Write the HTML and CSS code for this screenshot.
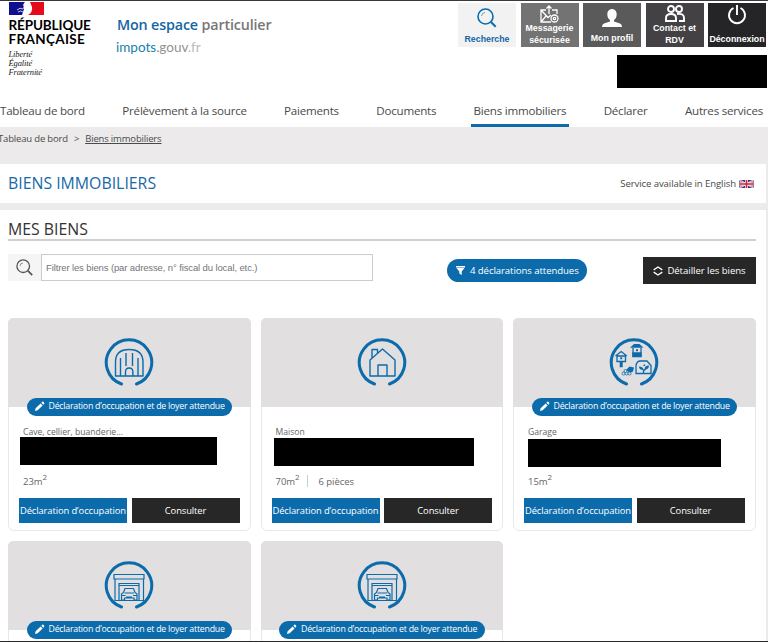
FILE: index.html
```
<!DOCTYPE html>
<html lang="fr">
<head>
<meta charset="utf-8">
<title>Biens immobiliers</title>
<link rel="stylesheet" href="styles.css">
</head>
<body>
<svg class="defs" width="0" height="0">
  <symbol id="ring" viewBox="0 0 50 50"><path d="M17.500 46A22.700 22.700 0 1 1 32.500 46" fill="none" stroke="#0b6bab" stroke-width="3" stroke-linecap="round"/></symbol>
  <symbol id="pen" viewBox="0 0 12 12"><path d="M1 11l.8-3L7.200 2.600l2.200 2.200L4 10.200zM8 1.900L9 .9q.6-.5 1.200 0l.9.9q.5.6 0 1.200L10.200 4z" fill="#fff"/></symbol>
  <symbol id="garage" viewBox="0 0 50 50"><use href="#ring"/><g fill="none" stroke="#0b6bab" stroke-width="1.200"><path d="M10 13.500h30v4.500H10zM11 18v21.500h28.500V18M15 39V22.500h20V39M15 24.500h20"/><path d="M17.500 39v-6l2-1.500 1.500-4h8.500l1.500 4 2 1.500v6h-3v-2h-9.500v2zM20.500 32h9.500M18 34.500h3.500M29 34.500h3.500M22 36h6" stroke-width="1.200"/></g></symbol>
</svg>
<div class="page">
  <header class="header">
    <div class="brand">
      <svg class="flag" width="36" height="13" viewBox="0 0 36 13"><path fill="#fff" d="M0 0h36v13H0z"/><path fill="#10108f" d="M0 0h16q-3 3-1 5-2 1 0 2l-2 6H0z"/><path fill="#e30b1c" d="M21 0h14v13H19q5-3 4-8z"/><path d="M8 8q3-3 6-1M9 10q3-2 5 0" stroke="#c6c6e8" fill="none"/></svg>
      <div class="rf"><div class="rep">RÉPUBLIQUE</div><div class="fr">FRANÇAISE</div></div>
      <div class="motto">Liberté<br>Égalité<br>Fraternité</div>
    </div>
    <div class="site">
      <div class="space"><b>Mon espace</b> particulier</div>
      <div class="domain"><span>impots</span>.gouv<i>.fr</i></div>
    </div>
    <div class="account">
      <div class="tiles">
        <div class="tile search"><svg width="20" height="20" viewBox="0 0 20 20" fill="none" stroke="#0b6bab" stroke-width="1.600"><circle cx="8.500" cy="8.500" r="7.500"/><path d="M13.700 13.700l5 5" stroke-width="2"/><path d="M4.500 8a4 4 0 0 1 3.500-3.500" stroke-width=".6"/></svg><span>Recherche</span></div>
        <div class="tile mail"><svg width="19" height="18" viewBox="0 0 19 18" fill="none" stroke="#fff" stroke-width="1.300"><path d="M6 5H1v12h10M12 5h5v4M1 5l7 7.500 3-2.500M1 17l5-6M9 9V1M6.500 3.500L9 1l2.500 2.500"/><circle cx="14.500" cy="13.500" r="3.500"/><circle cx="14.500" cy="13.500" r="1.200"/></svg><span>Messagerie<br>sécurisée</span></div>
        <div class="tile profile"><svg width="20" height="18" viewBox="0 0 20 18" fill="#fff"><path d="M5.300 5c0-6.700 9.400-6.700 9.400 0 0 3-1 5-2.700 6v1.500l6 2q2 .8 2 3.500H0q0-2.700 2-3.500l6-2V11C6.300 10 5.300 8 5.300 5z"/></svg><span>Mon profil</span></div>
        <div class="tile contact"><svg width="20" height="17" viewBox="0 0 20 17" fill="none" stroke="#fff" stroke-width="1.900"><circle cx="6" cy="4" r="3"/><circle cx="14" cy="4" r="3"/><path d="M1 16v-3q0-4 5-4t5 4v3zM12 9q7-1 7 4v3h-5"/></svg><span>Contact et<br>RDV</span></div>
        <div class="tile logout"><svg width="20" height="20" viewBox="0 0 20 20" fill="none" stroke="#fff" stroke-width="1.900"><path d="M6.500 3a8 8 0 1 0 7 0M10 0v10"/></svg><span>Déconnexion</span></div>
      </div>
      <div class="mask"></div>
    </div>
  </header>
  <nav class="nav">
    <a>Tableau de bord</a><a>Prélèvement à la source</a><a>Paiements</a><a>Documents</a><a class="active">Biens immobiliers</a><a>Déclarer</a><a>Autres services</a>
  </nav>
  <div class="crumbs"><span>Tableau de bord</span><span class="sep">&gt;</span><u>Biens immobiliers</u></div>
  <section class="title">
    <h1>BIENS IMMOBILIERS</h1>
    <div class="english">Service available in English <svg width="15" height="8" viewBox="0 0 15 8"><path fill="#283a80" d="M0 0h15v8H0z"/><path d="M0 0l15 8M15 0L0 8" stroke="#fff" stroke-width="1.600"/><path d="M0 0l15 8M15 0L0 8" stroke="#d2223c" stroke-width=".6"/><path d="M7.500 0v8M0 4h15" stroke="#fff" stroke-width="3"/><path d="M7.500 0v8M0 4h15" stroke="#d2223c" stroke-width="1.700"/></svg></div>
  </section>
  <main class="main">
    <h2>MES BIENS</h2>
    <div class="toolbar">
      <div class="filter"><div class="lens"><svg width="17" height="17" viewBox="0 0 17 17" fill="none" stroke="#555" stroke-width="1.300"><circle cx="7.200" cy="7.200" r="6.300"/><path d="M11.700 11.700l4.500 4.500" stroke-width="1.700"/><path d="M4 7a3 3 0 0 1 3-3" stroke-width=".6"/></svg></div><div class="field">Filtrer les biens (par adresse, n° fiscal du local, etc.)</div></div>
      <div class="pending"><svg width="9" height="9" viewBox="0 0 9 9"><path fill="#fff" d="M0 0h9v1.500H0zM.5 2h8L5.700 5.500V9L3.300 7.500v-2z"/></svg><span>4 déclarations attendues</span></div>
      <div class="detail"><svg width="10" height="10" viewBox="0 0 10 10" fill="none" stroke="#fff" stroke-width="1.300"><path d="M.7 3.900L5 1l4.300 2.900M.7 6.100L5 9l4.300-2.900"/></svg><span>Détailler les biens</span></div>
    </div>
    <div class="cards">
      <article class="card">
        <div class="visual"><svg width="50" height="50" viewBox="0 0 50 50"><use href="#ring"/><path d="M11.500 38V24q0-12.500 13.700-12.500T39 24v14zM16.500 38V20M22 28V15M28.500 28V15M34 38V20M21.500 38v-4q0-4 3.700-4t3.700 4v4" fill="none" stroke="#0b6bab" stroke-width="1.400" stroke-linejoin="round"/></svg></div>
        <div class="badge"><svg width="11" height="11"><use href="#pen"/></svg><span>Déclaration d’occupation et de loyer attendue</span></div>
        <div class="kind">Cave, cellier, buanderie...</div>
        <div class="address first"></div>
        <div class="facts"><span>23m<sup>2</sup></span></div>
        <div class="actions"><div class="declare"><span>Déclaration d’occupation</span></div><div class="consult"><span>Consulter</span></div></div>
      </article>
      <article class="card">
        <div class="visual"><svg width="50" height="50" viewBox="0 0 50 50"><use href="#ring"/><path d="M13 38V22l12.500-11L38 22v16zM15 20v-8.500h5.500v3.800M21 38V27h9v11" fill="none" stroke="#0b6bab" stroke-width="1.400" stroke-linejoin="round"/></svg></div>
        <div class="kind">Maison</div>
        <div class="address second"></div>
        <div class="facts"><span>70m<sup>2</sup></span><span class="rooms">6 pièces</span></div>
        <div class="actions"><div class="declare"><span>Déclaration d’occupation</span></div><div class="consult"><span>Consulter</span></div></div>
      </article>
      <article class="card">
        <div class="visual"><svg width="50" height="50" viewBox="0 0 50 50"><use href="#ring"/><g fill="none" stroke="#0b6bab" stroke-width="1.300"><path d="M8 17.500V23.500h8.500v-6M6.500 18L12.200 13.500l5.600 4.500M8 18h8.500M24 10v9M32 10v9M27 32v-4.500q1-4.500 4-4.500h7l4 4.500v8H27zM34.500 35.500v-4M34.500 33l4-4"/></g><path fill="#0b6bab" d="M21 9.800L25 6h5.500l4 3.800zM10.700 24h3v5.300h-3zM11.200 19.300h2v2h-2zM23.300 14.300h9.300v5h-9.300zM27 11.300h2v2h-2zM17 32l3.500-3.500 4.500 1-1 4-3 1.500zM35.500 31.500q0-4 4.500-4 0 4-4.500 4zM34.500 32q-4.500 0-4.500-3.500 4.500 0 4.500 3.500zM34 28l1.500-2 1 2z"/><g fill="#e1dfe0" stroke="#0b6bab" stroke-width=".8"><circle cx="14.500" cy="35.500" r="1.500"/><circle cx="17.500" cy="35.500" r="1.500"/><circle cx="20.500" cy="35.500" r="1.500"/><circle cx="16.500" cy="33" r="1.500"/></g></svg></div>
        <div class="badge"><svg width="11" height="11"><use href="#pen"/></svg><span>Déclaration d’occupation et de loyer attendue</span></div>
        <div class="kind">Garage</div>
        <div class="address third"></div>
        <div class="facts"><span>15m<sup>2</sup></span></div>
        <div class="actions"><div class="declare"><span>Déclaration d’occupation</span></div><div class="consult"><span>Consulter</span></div></div>
      </article>
      <article class="card">
        <div class="visual"><svg width="50" height="50"><use href="#garage"/></svg></div>
        <div class="badge"><svg width="11" height="11"><use href="#pen"/></svg><span>Déclaration d’occupation et de loyer attendue</span></div>
      </article>
      <article class="card">
        <div class="visual"><svg width="50" height="50"><use href="#garage"/></svg></div>
        <div class="badge"><svg width="11" height="11"><use href="#pen"/></svg><span>Déclaration d’occupation et de loyer attendue</span></div>
      </article>
    </div>
  </main>
</div>
</body>
</html>
```
FILE: styles.css
```
* { box-sizing: border-box; }
body { margin: 0; font-family: "Open Sans", sans-serif; color: #4a4a4a; }
svg { display: block; flex: none; }
.defs { position: absolute; }
.page { width: 768px; height: 642px; overflow: hidden; background: #eceaeb; border-top: 1px solid #3c393b; border-bottom: 1px solid #29282a; white-space: nowrap; }
.header { display: flex; height: 94px; background: #fff; }
.brand { width: 117px; padding: 1px 0 0 8.500px; color: #000; }
.rf { margin-top: 3px; font: 700 13.500px/14px Lato, sans-serif; }
.rep { letter-spacing: -.12px; }
.fr { letter-spacing: .35px; }
.motto { margin-top: 4px; font: italic 8.500px/8.800px "Liberation Serif", serif; letter-spacing: -.15px; color: #222; }
.site { flex: 1; padding-top: 14px; }
.space { font-size: 14.300px; line-height: 20px; font-weight: 550; letter-spacing: -.15px; color: #777; }
.space b { color: #1465a4; font-weight: 650; }
.domain { margin: 3px 0 0 -1px; font: 13.500px/18px Lato, sans-serif; color: #929292; }
.domain span { color: #1681a8; }
.domain i { font-style: normal; color: #bbb; }
.account { width: 310px; }
.tiles { display: flex; gap: 4.500px; padding-top: 2px; }
.tile { width: 58px; height: 44px; padding-bottom: 3px; display: flex; flex-direction: column; align-items: center; justify-content: flex-end; color: #fff; font: 700 8.800px/11.500px "Liberation Sans", sans-serif; text-align: center; }
.tile svg { margin-bottom: 2px; }
.tile.search { background: #f2f2f3; color: #1267a5; padding-bottom: 2px; }
.tile.search svg { margin-bottom: 6px; }
.tile.mail { background: #747374; }
.tile.mail svg { margin-bottom: 0; }
.tile.contact svg { margin-bottom: 1px; }
.tile.mail, .tile.contact { padding-bottom: 1px; }
.tile.profile { background: #5b5a5b; padding-bottom: 3px; }
.tile.profile svg { margin-bottom: 6px; }
.tile.contact { background: #434144; }
.tile.logout { background: #252427; padding-bottom: 2px; }
.tile.logout svg { margin-bottom: 9px; }
.mask { width: 150px; height: 33px; margin: 8px 0 0 158.500px; background: #000; }
.nav { display: flex; justify-content: space-between; height: 32px; padding-right: 5px; background: #fff; font-size: 11.600px; line-height: 32px; letter-spacing: -.23px; }
.nav a.active { height: 32px; margin: 0 -2.500px; padding: 0 2.500px; border-bottom: 3px solid #0b6bab; }
.crumbs { display: flex; height: 37px; padding-top: 3px; font-size: 9.500px; line-height: 17px; letter-spacing: -.17px; }
.crumbs span:first-child { margin-left: -2px; }
.crumbs .sep { margin: 0 6px; }
.title { display: flex; justify-content: space-between; align-items: center; width: 766px; height: 39px; padding: 0 12px 0 8px; background: #fff; }
h1, h2 { margin: 0; font-weight: 400; }
h1 { font-size: 15.850px; padding-bottom: 1px; color: #1769a8; }
.english { display: flex; align-items: center; gap: 3px; font-size: 9.600px; letter-spacing: -.1px; }
.main { width: 766px; height: 440px; margin-top: 7px; padding: 6px 10px 0 8px; background: #fff; }
h2 { height: 25px; border-bottom: 2px solid #d1d0d1; font-size: 15.850px; line-height: 26px; color: #333; }
.toolbar { display: flex; margin-top: 13px; height: 30px; }
.filter { display: flex; width: 365px; height: 27px; }
.lens { display: grid; place-items: center; width: 33px; background: #f5f5f5; }
.field { flex: 1; border: 1px solid #ccc; padding-left: 4px; font: 9.500px/25px "Liberation Sans", sans-serif; letter-spacing: -.12px; color: #757575; }
.pending { display: flex; align-items: center; gap: 5px; width: 140px; height: 23px; margin: 5px 0 0 74px; padding-left: 9px; border-radius: 12px; background: #0b6bab; color: #fff; font-size: 9.600px; letter-spacing: -.08px; font-weight: 500; }
.detail { display: flex; align-items: center; justify-content: center; gap: 4px; width: 113px; height: 27px; margin: 3px 0 0 auto; background: #272727; color: #fff; font-size: 9.600px; letter-spacing: -.05px; font-weight: 500; }
.pending span, .detail span { margin-top: -1px; }
.cards { display: grid; grid-template-columns: repeat(3, 242.500px); grid-auto-rows: 213px; gap: 10px; margin-top: 34px; }
.card { position: relative; border: 1px solid #e9e8e9; border-radius: 6px; background: #fff; }
.visual { display: flex; justify-content: center; height: 89px; margin: -1px -1px 0; padding-top: 20px; border-radius: 5px 5px 0 0; background: #e1dfe0; }
.badge { position: absolute; top: 79px; left: 17.500px; display: flex; align-items: center; gap: 4px; width: 205.500px; height: 18px; padding-left: 7px; border-radius: 9px; background: #0b6bab; color: #fff; font-size: 8.800px; line-height: 17px; letter-spacing: -.24px; font-weight: 500; }
.badge span { margin-top: -1px; }
.badge svg { margin-top: -2px; }
.kind { height: 30px; padding: 18px 0 0 14px; font-size: 8.600px; line-height: 14px; color: #666; }
.address { height: 28px; background: #000; }
.address.first { width: 196.500px; margin: 0 0 0 11px; }
.address.second { width: 200px; margin: 1px 0 -1px 12px; }
.address.third { width: 193.500px; margin: 2px 0 -2px 13.500px; }
.facts { display: flex; height: 33px; padding: 10px 0 0 14px; font-size: 9.500px; line-height: 14px; letter-spacing: -.05px; color: #666; }
.facts sup { font-size: 8px; line-height: 0; vertical-align: 5px; }
.rooms { height: 12px; margin-left: 7px; padding-left: 11px; border-left: 1px solid #ccc; }
.actions { display: flex; gap: 4.500px; padding-left: 10px; }
.actions div { display: flex; justify-content: center; align-items: center; width: 108px; height: 25px; color: #fff; font-size: 9.400px; letter-spacing: -.1px; font-weight: 500; }
.declare { background: #0b6bab; }
.consult { background: #272727; }
```
